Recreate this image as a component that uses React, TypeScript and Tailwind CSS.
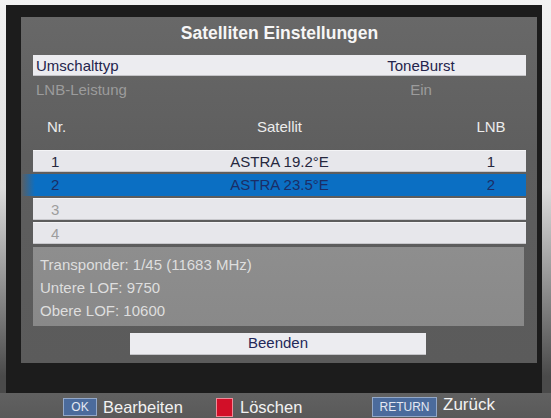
const font = { fontFamily: '"Liberation Sans", Arial, sans-serif' };

type Sat = { nr: string; name: string; lnb: string };

const satellites: Sat[] = [
  { nr: '1', name: 'ASTRA 19.2°E', lnb: '1' },
  { nr: '2', name: 'ASTRA 23.5°E', lnb: '2' },
  { nr: '3', name: '', lnb: '' },
  { nr: '4', name: '', lnb: '' },
];

function SatRow({ sat, selected }: { sat: Sat; selected: boolean }) {
  const empty = sat.name === '';
  return (
    <div
      className={
        selected
          ? '-ml-3 pl-3 h-[22px] grid grid-cols-[70px_1fr_70px] items-center text-[15px] text-[#1b2d66] bg-[linear-gradient(to_right,#5e5e5e,#0b6fc3_14px)]'
          : 'h-[22px] grid grid-cols-[70px_1fr_70px] items-center text-[15px] bg-[#e7e7eb] border-t border-[#f4f4f6] border-b border-b-[#c8c8cc] ' +
            (empty ? 'text-[#9d9d9d]' : 'text-[#26283e]')
      }
    >
      <span className="pl-[18px]">{sat.nr}</span>
      <span className="text-center">{sat.name}</span>
      <span className="text-center">{sat.lnb}</span>
    </div>
  );
}

export default function App() {
  return (
    <div
      className="w-[551px] h-[418px] overflow-hidden flex flex-col bg-[linear-gradient(to_bottom,#f3f3f3,#dcdcdc_45%,#4a4a4a_90%)]"
      style={font}
    >
      {/* TV frame */}
      <div className="mt-[5px] ml-[6px] w-[536px] h-[388px] bg-[#1c1c1c] pt-[12px] pl-[15px] pr-[5px] pb-[30px]">
        <div className="h-full bg-[linear-gradient(to_bottom,#686868,#5e5e5e_40%,#5b5b5b)] pt-[4px] px-[12px] pr-[11px] flex flex-col">
          <div className="h-[24px] leading-[24px] text-center text-[17.5px] font-bold text-[#f6f6f6]">
            Satelliten Einstellungen
          </div>

          {/* settings */}
          <div className="mt-[10px] h-[21px] grid grid-cols-[1fr_210px] items-center bg-[#ececf0] border-b border-[#c4c4c8] text-[15px] text-[#24244c]">
            <span className="pl-[3px]">Umschalttyp</span>
            <span className="text-center">ToneBurst</span>
          </div>
          <div className="mt-[3px] h-[21px] grid grid-cols-[1fr_210px] items-center text-[15px] text-[#9c9c9c]">
            <span className="pl-[3px]">LNB-Leistung</span>
            <span className="text-center">Ein</span>
          </div>

          {/* table header */}
          <div className="mt-[16px] h-[22px] grid grid-cols-[70px_1fr_70px] items-center text-[15px] text-[#ececec]">
            <span className="pl-[14px]">Nr.</span>
            <span className="text-center">Satellit</span>
            <span className="text-center">LNB</span>
          </div>

          {/* satellite list */}
          <div className="mt-[12px] flex flex-col gap-[2px]">
            {satellites.map((s, i) => (
              <SatRow key={s.nr} sat={s} selected={i === 1} />
            ))}
          </div>

          {/* info box */}
          <div className="mt-[3px] mr-[2px] h-[79px] pt-[6px] pl-[7px] bg-[linear-gradient(to_bottom,#8e8e8e,#898989)] text-[15px] text-[#dedede]">
            <div className="h-[23px] leading-[23px]">Transponder: 1/45 (11683 MHz)</div>
            <div className="h-[23px] leading-[23px]">Untere LOF: 9750</div>
            <div className="h-[23px] leading-[23px]">Obere LOF: 10600</div>
          </div>

          <div className="mt-[7px] ml-[97px] w-[296px] h-[22px] flex items-center justify-center bg-[#ececf0] border-b border-[#c4c4c8] text-[15px] text-[#23285a]">
            Beenden
          </div>
        </div>
      </div>

      {/* help bar */}
      <div className="h-[25px] pt-[3px] flex items-center bg-[linear-gradient(to_bottom,#616161,#595959)] text-[#f2f2f2]">
        <span className="ml-[63px] w-[34px] h-[18px] flex items-center justify-center bg-[#4b6b9c] border border-[#93a8c8] text-[12px] text-[#e4e8f2]">
          OK
        </span>
        <span className="ml-[6px] w-[82px] text-[16.5px] leading-[20px]">Bearbeiten</span>
        <span className="ml-[31px] w-[17px] h-[19px] bg-[#d20f28] border border-[#f08a98]" />
        <span className="ml-[7px] w-[64px] text-[16.5px] leading-[20px]">Löschen</span>
        <span className="ml-[68px] w-[65px] h-[20px] flex items-center justify-center bg-[#4b6b9c] border border-[#93a8c8] text-[12px] text-[#e4e8f2]">
          RETURN
        </span>
        <span className="ml-[6px] -mt-[4px] text-[17px] leading-[20px]">Zurück</span>
      </div>
    </div>
  );
}
